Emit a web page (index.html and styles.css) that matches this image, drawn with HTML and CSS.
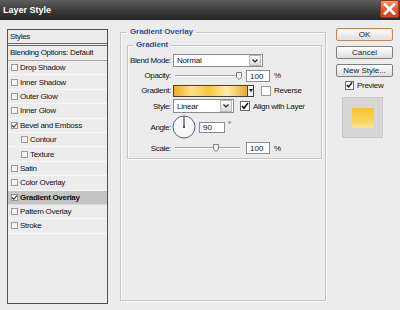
FILE: index.html
```html
<!DOCTYPE html>
<html lang="en">
<head>
    <meta charset="UTF-8">
    <title>Layer Style</title>
    <link rel="stylesheet" href="styles.css">
</head>
<body>
    <div class="titlebar">
        <span class="title">Layer Style</span>
        <button class="close" title="Close">
            <svg width="13" height="12" viewBox="0 0 13 12"><path d="M2 1.5 L11 10.5 M11 1.5 L2 10.5" stroke="#fff" stroke-width="2.6" stroke-linecap="square"/></svg>
        </button>
    </div>

    <div class="content">
        <!-- left: list of effects -->
        <div class="styles-list">
            <div class="list-head">Styles</div>
            <div class="list-blend">Blending Options: Default</div>
            <div class="item"><span class="cb"></span>Drop Shadow</div>
            <div class="item"><span class="cb"></span>Inner Shadow</div>
            <div class="item"><span class="cb"></span>Outer Glow</div>
            <div class="item"><span class="cb"></span>Inner Glow</div>
            <div class="item"><span class="cb"><svg width="7" height="7" viewBox="0 0 7 7"><path d="M1 3.5 L2.8 5.3 L6 1.5" fill="none" stroke="#333" stroke-width="1.1"/></svg></span>Bevel and Emboss</div>
            <div class="item sub"><span class="cb"></span>Contour</div>
            <div class="item sub"><span class="cb"></span>Texture</div>
            <div class="item"><span class="cb"></span>Satin</div>
            <div class="item"><span class="cb"></span>Color Overlay</div>
            <div class="item active"><span class="cb"><svg width="7" height="7" viewBox="0 0 7 7"><path d="M1 3.5 L2.8 5.3 L6 1.5" fill="none" stroke="#222" stroke-width="1.1"/></svg></span>Gradient Overlay</div>
            <div class="item"><span class="cb"></span>Pattern Overlay</div>
            <div class="item"><span class="cb"></span>Stroke</div>
        </div>

        <!-- middle: settings -->
        <fieldset class="group outer">
            <legend>Gradient Overlay</legend>
            <fieldset class="group inner">
                <legend>Gradient</legend>
                <div class="form">
                    <div class="row r-blend">
                        <label>Blend Mode:</label>
                        <div class="select blend"><span class="value">Normal</span><span class="drop"><svg width="6" height="4" viewBox="0 0 6 4"><path d="M0.5 0.5 L3 3 L5.5 0.5" fill="none" stroke="#222" stroke-width="1.2"/></svg></span></div>
                    </div>
                    <div class="row r-opacity">
                        <label>Opacity:</label>
                        <svg class="slider" width="70" height="10" viewBox="0 0 70 10"><path d="M2 4.5 H69" stroke="#a4a4a4"/><path d="M2 5.5 H69" stroke="#fdfdfd"/><path d="M63.5 1.5 H68.5 V6 L66 8.5 L63.5 6 Z" fill="#f6f6f6" stroke="#7c7c7c"/></svg>
                        <span class="field num">100</span>
                        <span class="unit">%</span>
                    </div>
                    <div class="row r-gradient">
                        <label>Gradient:</label>
                        <span class="gradient-bar"></span>
                        <span class="grad-drop"><svg width="4" height="3" viewBox="0 0 4 3"><path d="M0 0 H4 L2 3 Z" fill="#111"/></svg></span>
                        <span class="box reverse"></span>
                        <span class="opt">Reverse</span>
                    </div>
                    <div class="row r-style">
                        <label>Style:</label>
                        <div class="select style"><span class="value">Linear</span><span class="drop"><svg width="6" height="4" viewBox="0 0 6 4"><path d="M0.5 0.5 L3 3 L5.5 0.5" fill="none" stroke="#222" stroke-width="1.2"/></svg></span></div>
                        <span class="box checked align"><svg width="8" height="8" viewBox="0 0 8 8"><path d="M1 4 L3 6.3 L7 1" fill="none" stroke="#111" stroke-width="1.6"/></svg></span>
                        <span class="opt">Align with Layer</span>
                    </div>
                    <div class="row r-angle">
                        <label>Angle:</label>
                        <svg class="dial" width="24" height="24" viewBox="0 0 24 24"><circle cx="12" cy="12" r="11" fill="#f7f7f7" stroke="#50607a"/><path d="M12 12 V1.5" stroke="#222"/><circle cx="12" cy="12" r="1" fill="#222"/></svg>
                        <span class="field deg">90</span>
                        <span class="unit degree">°</span>
                    </div>
                    <div class="row r-scale">
                        <label>Scale:</label>
                        <svg class="slider" width="70" height="10" viewBox="0 0 70 10"><path d="M2 4.5 H67" stroke="#a4a4a4"/><path d="M2 5.5 H67" stroke="#fdfdfd"/><path d="M40.5 1.5 H45.5 V6 L43 8.5 L40.5 6 Z" fill="#f6f6f6" stroke="#7c7c7c"/></svg>
                        <span class="field num">100</span>
                        <span class="unit">%</span>
                    </div>
                </div>
            </fieldset>
        </fieldset>

        <!-- right: buttons and preview -->
        <div class="actions">
            <button class="btn default">OK</button>
            <button class="btn">Cancel</button>
            <button class="btn">New Style...</button>
            <div class="preview-check">
                <span class="box checked"><svg width="8" height="8" viewBox="0 0 8 8"><path d="M1 4 L3 6.3 L7 1" fill="none" stroke="#111" stroke-width="1.6"/></svg></span>
                <span class="opt">Preview</span>
            </div>
            <div class="preview"><div class="swatch"></div></div>
        </div>
    </div>
</body>
</html>
```

FILE: styles.css
```css
body {
    margin: 0;
    width: 400px;
    height: 310px;
    overflow: hidden;
    background-color: #ececec;
    font-family: "Liberation Sans", Arial, sans-serif;
    font-size: 8px;
    color: #111;
}
.titlebar {
    height: 20px;
    display: flex;
    justify-content: space-between;
    align-items: center;
    padding-left: 3px;
    box-sizing: border-box;
    background: linear-gradient(#5e5e5e, #393939 55%, #262626);
}
.title {
    color: #fff;
    font-weight: bold;
    font-size: 9px;
}
.close {
    align-self: flex-start;
    width: 19px;
    height: 18px;
    margin-right: 1px;
    padding: 0;
    border: 1px solid #9a3a18;
    border-radius: 2px;
    background: linear-gradient(#f09a72, #e0613a 45%, #c9461f);
    display: flex;
    align-items: center;
    justify-content: center;
}
.content {
    display: flex;
    align-items: flex-start;
    padding: 9px 0 0 7px;
}

/* left list */
.styles-list {
    width: 101px;
    height: 275px;
    box-sizing: border-box;
    border: 1px solid #505050;
    letter-spacing: -0.3px;
}
.list-head {
    height: 13px;
    line-height: 13px;
    padding-left: 2px;
    border-bottom: 3px double #6a6a6a;
}
.list-blend {
    height: 14px;
    line-height: 14px;
    padding-left: 2px;
    border-bottom: 1px solid #a8a8a8;
}
.item {
    height: 14.4px;
    box-sizing: border-box;
    display: flex;
    align-items: center;
    padding-left: 3px;
    border-bottom: 1px solid #f8f8f8;
}
.item.sub {
    padding-left: 13px;
}
.item.active {
    background-color: #c4c4c4;
    font-weight: bold;
    border-bottom-color: #dcdcdc;
}
.cb {
    width: 7px;
    height: 7px;
    box-sizing: border-box;
    border: 1px solid #9a9a9a;
    background-color: #f6f6f6;
    margin-right: 2px;
    display: flex;
    align-items: center;
    justify-content: center;
}
.cb svg {
    flex: none;
}

/* group boxes */
.group {
    margin: 0;
    min-width: 0;
    box-sizing: border-box;
    border: 1px solid #c6c6c6;
    box-shadow: inset 1px 1px 0 #fbfbfb, 1px 1px 0 #fbfbfb;
}
.group legend {
    font-size: 8px;
    font-weight: bold;
    line-height: 10px;
    color: #2b4f9c;
    letter-spacing: -0.1px;
}
.outer {
    margin: -2px 0 0 12px;
    width: 206px;
    height: 274px;
    padding: 3px 3px 0 6px;
}
.outer > legend {
    padding: 0 3px;
}
.inner {
    padding: 4px 0 3px 0;
}
.inner > legend {
    margin-left: 6px;
    padding: 0 2px;
}
.form {
    display: flex;
    flex-direction: column;
    gap: 2px;
}
.row {
    display: flex;
    align-items: center;
    height: 13px;
}
.row label {
    width: 43px;
    margin-right: 2px;
    text-align: right;
    letter-spacing: -0.35px;
}
.r-style { height: 14px; }
.r-angle { height: 24px; }
.r-scale { height: 14px; }

.select {
    display: flex;
    align-items: center;
    height: 13px;
    box-sizing: border-box;
    border: 1px solid #8c8c8c;
    background-color: #fff;
}
.select.blend { width: 90px; }
.select.style { width: 61px; height: 14px; }
.select .value {
    flex: 1;
    padding-left: 3px;
    letter-spacing: -0.2px;
}
.select .drop {
    width: 10px;
    height: 9px;
    margin-right: 1px;
    border: 1px solid #b8b8b8;
    background: linear-gradient(#fbfbfb, #dadada);
    display: flex;
    align-items: center;
    justify-content: center;
}
.select.style .drop { height: 10px; }

.field {
    height: 12px;
    line-height: 11px;
    box-sizing: border-box;
    border: 1px solid #8c8c8c;
    background-color: #fff;
    padding-left: 3px;
    font-size: 8px;
}
.field.num {
    width: 24px;
    margin-left: 3px;
}
.field.deg {
    width: 26px;
    height: 11px;
    line-height: 10px;
    margin-left: 3px;
}
.unit {
    margin-left: 4px;
}
.unit.degree {
    margin-left: 3px;
    align-self: flex-start;
    margin-top: 5px;
}

.gradient-bar {
    width: 75px;
    height: 12px;
    box-sizing: border-box;
    border: 1px solid #404040;
    background: linear-gradient(90deg, #f0ad25, #fbe08c 24%, #f8c53a 48%, #fdeca9 72%, #eeab28);
}
.grad-drop {
    width: 6px;
    height: 12px;
    box-sizing: border-box;
    border: 1px solid #404040;
    border-left: none;
    background-color: #f2f2f2;
    display: flex;
    align-items: center;
    justify-content: center;
}
.box {
    width: 10px;
    height: 10px;
    box-sizing: border-box;
    border: 1px solid #6a6a6a;
    background-color: #fff;
    display: flex;
    align-items: center;
    justify-content: center;
}
.box.reverse {
    margin-left: 7px;
    border-color: #9a9a9a;
}
.box.align {
    margin-left: 6px;
}
.opt {
    margin-left: 3px;
    letter-spacing: -0.3px;
}
.dial {
    margin-left: -1px;
}

/* right column */
.actions {
    width: 57px;
    margin: -1px 0 0 10px;
    display: flex;
    flex-direction: column;
}
.btn {
    height: 13px;
    margin: 0 0 5px 0;
    padding: 0;
    border: 1px solid #7e7e7e;
    border-radius: 2px;
    background: linear-gradient(#fefefe, #dedede);
    font-family: "Liberation Sans", Arial, sans-serif;
    font-size: 8px;
    color: #222;
}
.btn.default {
    border-color: #b98a5e;
    box-shadow: inset 0 0 0 1px #f3e3d2;
}
.preview-check {
    display: flex;
    align-items: center;
    height: 10px;
    margin-top: -2px;
    padding-left: 9px;
    font-size: 8px;
}
.preview-check .box {
    width: 9px;
    height: 9px;
}
.preview {
    width: 41px;
    height: 41px;
    margin: 7px 0 0 6px;
    box-sizing: border-box;
    border: 1px solid #c9c9c9;
    background-color: #d6d6d6;
    display: flex;
    align-items: center;
    justify-content: center;
}
.swatch {
    width: 22px;
    height: 20px;
    background: linear-gradient(#f5c232, #f9d25a 60%, #fde48c);
}
```
